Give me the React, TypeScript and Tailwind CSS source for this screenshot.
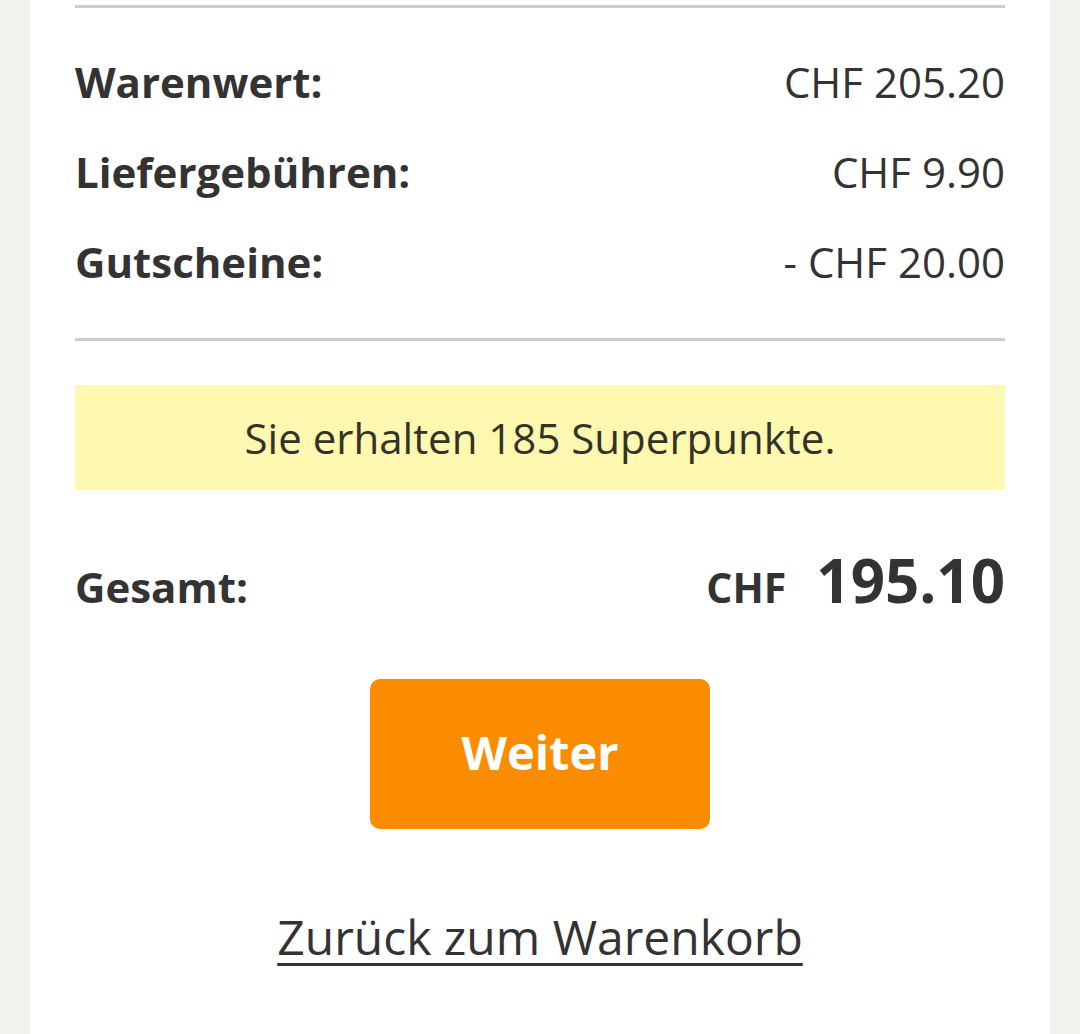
const rows = [
  { label: 'Warenwert:', value: 'CHF 205.20' },
  { label: 'Liefergebühren:', value: 'CHF 9.90' },
  { label: 'Gutscheine:', value: '- CHF 20.00' },
]

export default function App() {
  return (
    <div
      className="min-h-[1034px] w-[1080px] bg-[#f2f1ed] text-[#333333]"
      style={{ fontFamily: '"Open Sans", "Noto Sans", sans-serif' }}
    >
      <div className="mx-[30px] min-h-[1034px] bg-white px-[45px] pt-[5px]">
        <div className="h-[3px] bg-[#cccccc]" />

        {/* Summary rows */}
        <div className="mt-[28px]">
          {rows.map((row) => (
            <div key={row.label} className="flex h-[90px] items-center justify-between">
              <span className="text-[42px] font-bold">{row.label}</span>
              <span className="text-[42px] font-medium">{row.value}</span>
            </div>
          ))}
        </div>

        <div className="mt-[32px] h-[3px] bg-[#cccccc]" />

        {/* Points notice */}
        <div className="mt-[44px] flex h-[105px] items-center justify-center bg-[#fff8b0] text-[42px] text-[#333326]">
          Sie erhalten 185 Superpunkte.
        </div>

        {/* Total */}
        <div className="mt-[40px] flex h-[100px] items-baseline justify-between leading-[100px]">
          <span className="text-[42px] font-bold">Gesamt:</span>
          <span className="flex items-baseline gap-[30px]">
            <span className="text-[41px] font-bold">CHF</span>
            <span className="text-[60px] font-bold">195.10</span>
          </span>
        </div>

        <div className="mt-[49px] flex justify-center">
          <button className="h-[150px] w-[340px] rounded-[10px] bg-[#fb8c00] pb-[4px] text-[47px] font-bold text-white">
            Weiter
          </button>
        </div>

        <div className="mt-[78px] flex justify-center">
          <a href="#" className="text-[48px] leading-[60px] underline decoration-[3px] underline-offset-[8px]">
            Zurück zum Warenkorb
          </a>
        </div>
      </div>
    </div>
  )
}
